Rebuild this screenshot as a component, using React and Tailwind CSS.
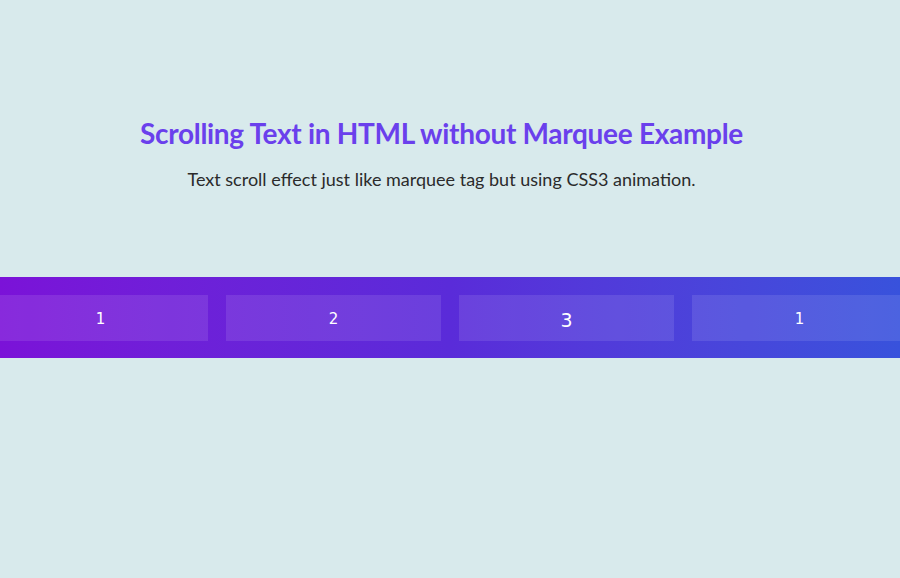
import React from "react";

const items = [
  { label: "1", cls: "text-[15px] translate-y-[1px]" },
  { label: "2", cls: "text-[15px] translate-y-[1px]" },
  { label: "3", cls: "text-[19px] translate-y-[2px]" },
  { label: "1", cls: "text-[15px] translate-y-[1px]" },
];

export default function App() {
  return (
    <div className="min-h-[578px] w-full bg-[#d8eaec] overflow-hidden">
      <header className="pt-[113px] pr-[17px] text-center">
        <h1 className="text-[28px] leading-[40px] font-bold text-[#6a40ec] tracking-[-0.3px] [font-family:Lato,'Open_Sans',sans-serif]">
          Scrolling Text in HTML without Marquee Example
        </h1>
        <p className="mt-[13px] text-[18px] leading-[26px] text-[#2b2b2b] [font-family:Lato,'Open_Sans',sans-serif]">
          Text scroll effect just like marquee tag but using CSS3 animation.
        </p>
      </header>

      <section className="mt-[85px] h-[81px] w-full bg-linear-to-r from-[#7b12d8] via-[#5a2bd9] to-[#3852dc] py-[18px] overflow-hidden">
        <div className="flex gap-[18px] -ml-[7px] w-max">
          {items.map((it, i) => (
            <div
              key={i}
              className="w-[215px] h-[46px] flex items-center justify-center bg-white/10 text-white [font-family:'DejaVu_Sans',sans-serif]"
            >
              <span className={it.cls}>{it.label}</span>
            </div>
          ))}
        </div>
      </section>
    </div>
  );
}
